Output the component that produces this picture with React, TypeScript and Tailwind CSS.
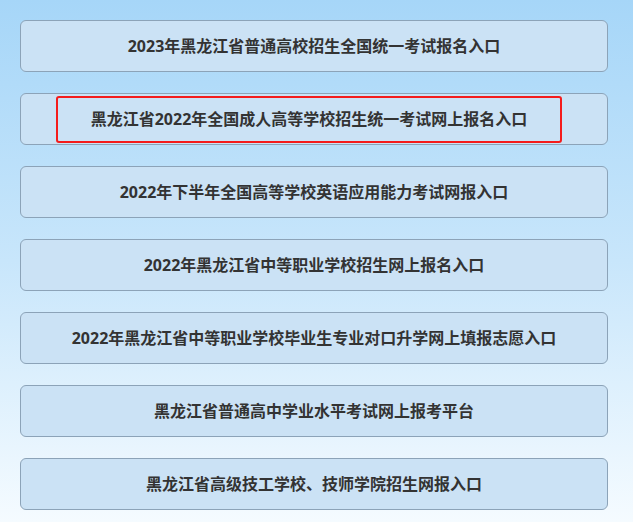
const links = [
  "2023年黑龙江省普通高校招生全国统一考试报名入口",
  "黑龙江省2022年全国成人高等学校招生统一考试网上报名入口",
  "2022年下半年全国高等学校英语应用能力考试网报入口",
  "2022年黑龙江省中等职业学校招生网上报名入口",
  "2022年黑龙江省中等职业学校毕业生专业对口升学网上填报志愿入口",
  "黑龙江省普通高中学业水平考试网上报考平台",
  "黑龙江省高级技工学校、技师学院招生网报入口",
];

export default function App() {
  return (
    <div
      className="w-[633px] h-[522px] overflow-hidden bg-gradient-to-b from-[#a6d6f8] via-[#c8e6fb] to-[#f5fbff] pt-5 pl-5"
      style={{ fontFamily: '"Noto Sans", "Noto Sans CJK SC", sans-serif' }}
    >
      <div className="flex flex-col gap-[21px] w-[588px]">
        {links.map((t, i) => (
          <a
            key={i}
            href="#"
            className="h-[52px] flex items-center justify-center rounded-[6px] border border-[#8ca3b8] bg-[#cbe2f5] text-[16px] font-bold text-[#333]"
          >
            {i === 1 ? (
              <span className="w-[506px] h-[47px] -ml-[10px] flex items-center justify-center border-2 border-[#f41c1c] rounded-[3px]">
                {t}
              </span>
            ) : (
              t
            )}
          </a>
        ))}
      </div>
    </div>
  );
}
